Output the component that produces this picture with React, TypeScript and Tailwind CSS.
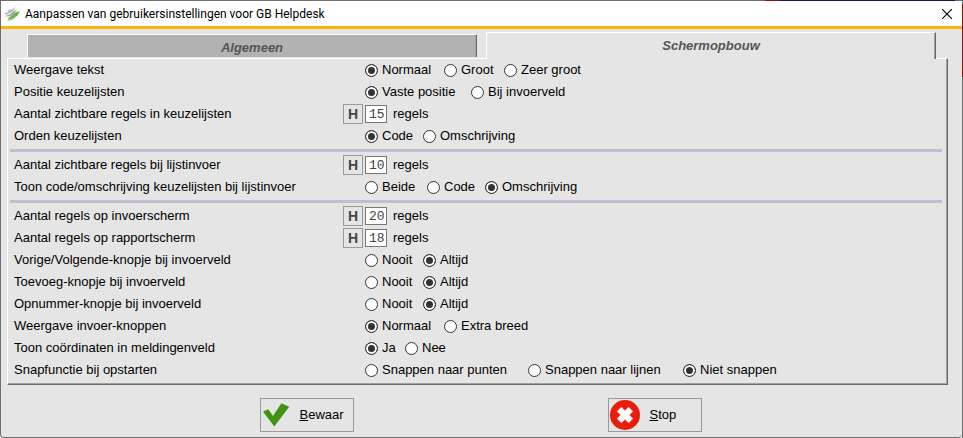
import { useState } from 'react';
import clsx from 'clsx';

type Option = { label: string; width: string };

type Field =
  | { id: string; label: string; kind: 'number'; value: string }
  | { id: string; label: string; kind: 'radio'; value: string; options: Option[] };

const nooitAltijd: Option[] = [
  { label: 'Nooit', width: 'w-[58px]' },
  { label: 'Altijd', width: 'w-[58px]' },
];

const groups: Field[][] = [
  [
    {
      id: 'weergave-tekst',
      label: 'Weergave tekst',
      kind: 'radio',
      value: 'Normaal',
      options: [
        { label: 'Normaal', width: 'w-[79px]' },
        { label: 'Groot', width: 'w-[60px]' },
        { label: 'Zeer groot', width: 'w-auto' },
      ],
    },
    {
      id: 'positie-keuzelijsten',
      label: 'Positie keuzelijsten',
      kind: 'radio',
      value: 'Vaste positie',
      options: [
        { label: 'Vaste positie', width: 'w-[106px]' },
        { label: 'Bij invoerveld', width: 'w-auto' },
      ],
    },
    { id: 'regels-keuzelijsten', label: 'Aantal zichtbare regels in keuzelijsten', kind: 'number', value: '15' },
    {
      id: 'orden-keuzelijsten',
      label: 'Orden keuzelijsten',
      kind: 'radio',
      value: 'Code',
      options: [
        { label: 'Code', width: 'w-[58px]' },
        { label: 'Omschrijving', width: 'w-auto' },
      ],
    },
  ],
  [
    { id: 'regels-lijstinvoer', label: 'Aantal zichtbare regels bij lijstinvoer', kind: 'number', value: '10' },
    {
      id: 'toon-code',
      label: 'Toon code/omschrijving keuzelijsten bij lijstinvoer',
      kind: 'radio',
      value: 'Omschrijving',
      options: [
        { label: 'Beide', width: 'w-[62px]' },
        { label: 'Code', width: 'w-[58px]' },
        { label: 'Omschrijving', width: 'w-auto' },
      ],
    },
  ],
  [
    { id: 'regels-invoerscherm', label: 'Aantal regels op invoerscherm', kind: 'number', value: '20' },
    { id: 'regels-rapportscherm', label: 'Aantal regels op rapportscherm', kind: 'number', value: '18' },
    { id: 'vorige-volgende', label: 'Vorige/Volgende-knopje bij invoerveld', kind: 'radio', value: 'Altijd', options: nooitAltijd },
    { id: 'toevoeg', label: 'Toevoeg-knopje bij invoerveld', kind: 'radio', value: 'Altijd', options: nooitAltijd },
    { id: 'opnummer', label: 'Opnummer-knopje bij invoerveld', kind: 'radio', value: 'Altijd', options: nooitAltijd },
    {
      id: 'invoer-knoppen',
      label: 'Weergave invoer-knoppen',
      kind: 'radio',
      value: 'Normaal',
      options: [
        { label: 'Normaal', width: 'w-[79px]' },
        { label: 'Extra breed', width: 'w-auto' },
      ],
    },
    {
      id: 'coordinaten',
      label: 'Toon coördinaten in meldingenveld',
      kind: 'radio',
      value: 'Ja',
      options: [
        { label: 'Ja', width: 'w-[40px]' },
        { label: 'Nee', width: 'w-auto' },
      ],
    },
    {
      id: 'snapfunctie',
      label: 'Snapfunctie bij opstarten',
      kind: 'radio',
      value: 'Niet snappen',
      options: [
        { label: 'Snappen naar punten', width: 'w-[163px]' },
        { label: 'Snappen naar lijnen', width: 'w-[155px]' },
        { label: 'Niet snappen', width: 'w-auto' },
      ],
    },
  ],
];

function AppLogo() {
  return (
    <svg viewBox="0 0 16 14" className="w-4 h-3.5 shrink-0" aria-hidden="true">
      <path d="M0 6.6 4 5.2 4.6 2.8 8 2.4 12 0 9.6 3.2 5.6 6.2 2 7.8Z" fill="#b2b5b4" />
      <path d="M0.6 9.2 5.6 7.4 9.6 4 13 3 10 7.2 5.4 9.4Z" fill="#a3a7a5" />
      <path d="M4 11.6 8.6 8 12.4 5 16 4.4 13.4 8.4 9.4 11.4 5 12.8Z" fill="#68b04c" />
      <path d="M2.6 13 8 11.8 13.4 8.4 9 12.6 4.4 14Z" fill="#a5c497" />
    </svg>
  );
}

function CheckIcon() {
  return (
    <svg viewBox="0 0 28 26" className="w-7 h-[26px]" aria-hidden="true">
      <path d="M1 9.6 6.2 7.2 11 14 19.4 1.2 27.2 4.8 12.3 24.6Z" fill="#429312" />
    </svg>
  );
}

function StopIcon() {
  return (
    <svg viewBox="0 0 30 30" className="w-[30px] h-[30px]" aria-hidden="true">
      <circle cx="15" cy="15" r="15" fill="#ea1c0c" />
      <path
        d="M11.4 7.2 15 10.8 18.6 7.2 22.8 11.4 19.2 15 22.8 18.6 18.6 22.8 15 19.2 11.4 22.8 7.2 18.6 10.8 15 7.2 11.4Z"
        fill="#fff"
        stroke="#fff"
        strokeWidth="0.6"
        strokeLinejoin="round"
      />
    </svg>
  );
}

function NumberField({ field }: { field: Extract<Field, { kind: 'number' }> }) {
  const [value, setValue] = useState(field.value);

  return (
    <div className="flex items-center h-[22px]">
      <label htmlFor={field.id} className="w-[329px] shrink-0">
        {field.label}
      </label>
      <button
        type="button"
        onClick={() => setValue(field.value)}
        className="w-5 h-5 mr-0.5 border border-[#999] text-sm leading-4 font-bold text-[#444] shrink-0"
      >
        H
      </button>
      <input
        id={field.id}
        value={value}
        onChange={(e) => setValue(e.target.value)}
        className="w-[22px] h-[18px] mr-1.5 pl-[3px] border border-[#777] bg-white font-['Liberation_Mono',monospace] text-[13px] text-[#444] outline-none"
      />
      <span>regels</span>
    </div>
  );
}

function RadioField({ field }: { field: Extract<Field, { kind: 'radio' }> }) {
  const [value, setValue] = useState(field.value);

  return (
    <div role="radiogroup" aria-labelledby={field.id} className="flex items-center h-[22px]">
      <span id={field.id} className="w-[351px] shrink-0">
        {field.label}
      </span>
      {field.options.map((option) => (
        <label key={option.label} className={clsx('flex items-center gap-1 whitespace-nowrap', option.width)}>
          <input
            type="radio"
            name={field.id}
            checked={value === option.label}
            onChange={() => setValue(option.label)}
            className="appearance-none w-[13px] h-[13px] rounded-full border border-[#333] bg-white checked:bg-[#333] checked:shadow-[inset_0_0_0_2px_#fff] shrink-0"
          />
          {option.label}
        </label>
      ))}
    </div>
  );
}

export default function App() {
  const [tab, setTab] = useState('Schermopbouw');

  return (
    <div className="min-h-screen flex flex-col bg-white font-['Liberation_Sans',Arial,sans-serif] text-[13px] leading-4 text-black">
      {/* Top edge */}
      <div className="flex h-px bg-[#6e6e6e]">
        <span className="ml-auto w-3.5 bg-[#8b1118]" />
        <span className="w-44 mr-2 bg-[#1b1650]" />
      </div>

      <div className="flex-1 flex">
        <div className="flex-1 min-w-0 flex flex-col border-l border-b border-[#6e6e6e] rounded-b bg-[#e5e5e5]">
          {/* Title bar */}
          <header className="h-7 flex items-center justify-between bg-white border-b-3 border-[#fdb10e] pl-[3px] pr-2.5">
            <div className="flex items-center gap-[5px]">
              <AppLogo />
              <h1 className="font-['Roboto',sans-serif] text-xs">Aanpassen van gebruikersinstellingen voor GB Helpdesk</h1>
            </div>
            <button type="button" aria-label="Sluiten">
              <svg viewBox="0 0 10 10" className="w-2.5 h-2.5" fill="none" stroke="#000" strokeWidth="1.1">
                <path d="M0 0 10 10M10 0 0 10" />
              </svg>
            </button>
          </header>

          {/* Tabs */}
          <div role="tablist" className="flex items-end gap-[9px] px-[26px] pt-[3px]">
            {['Algemeen', 'Schermopbouw'].map((name) => (
              <button
                key={name}
                type="button"
                role="tab"
                aria-selected={tab === name}
                onClick={() => setTab(name)}
                className={clsx(
                  'flex-1 border-t border-l border-r border-t-white border-l-white border-r-[#696969] shadow-[inset_-1px_0_0_#a0a0a0] text-[13px] font-bold italic text-[#555]',
                  tab === name ? 'h-[27px] -mb-px relative bg-[#e5e5e5]' : 'h-[23px] mb-px pt-1 bg-[#b2b2b2]',
                )}
              >
                {name}
              </button>
            ))}
          </div>

          {/* Settings */}
          <main className="ml-1.5 mr-[14px] pb-[3px] pr-px border border-t-white border-l-white border-r-[#696969] border-b-[#696969] shadow-[inset_-1px_-1px_0_#a0a0a0]">
            {groups.map((fields, i) => (
              <section key={i} className={clsx('ml-0.5 pl-1 mr-1', i > 0 && 'mt-0.5 border-t-3 border-[#c6b9d2] pt-0.5')}>
                {fields.map((field) =>
                  field.kind === 'number' ? (
                    <NumberField key={field.id} field={field} />
                  ) : (
                    <RadioField key={field.id} field={field} />
                  ),
                )}
              </section>
            ))}
          </main>

          {/* Actions */}
          <footer className="flex justify-center gap-[254px] pt-[13px] pb-1 pr-0.5">
            <button type="button" className="w-[94px] h-[34px] flex items-center gap-2.5 pl-px border border-[#999]">
              <CheckIcon />
              <span>
                <u>B</u>ewaar
              </span>
            </button>
            <button type="button" className="w-[94px] h-[34px] flex items-center gap-2.5 pl-px border border-[#999]">
              <StopIcon />
              <span>
                <u>S</u>top
              </span>
            </button>
          </footer>
        </div>

        {/* Right edge */}
        <div className="w-px pt-[3px] bg-[#6e6e6e]">
          <div className="h-[73px] bg-[#8b1118]" />
        </div>
      </div>
    </div>
  );
}
